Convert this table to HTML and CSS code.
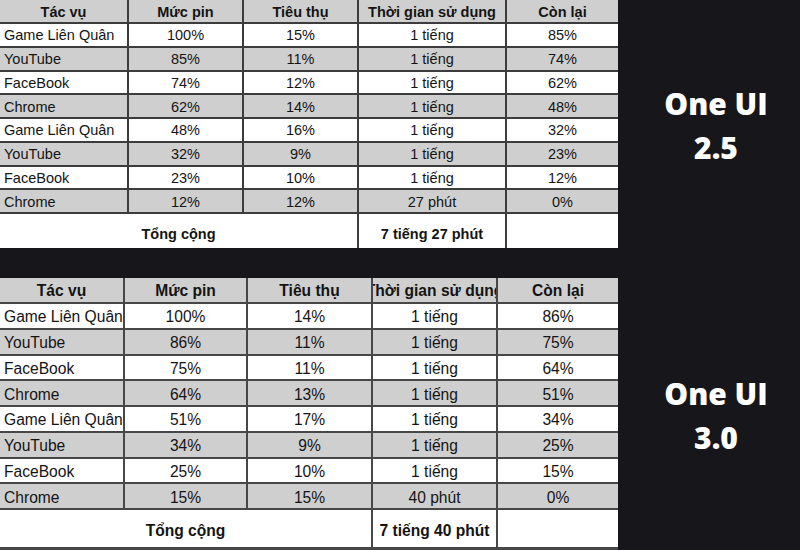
FILE: index.html
```html
<!DOCTYPE html>
<html lang="vi">
<head>
<meta charset="utf-8">
<title>One UI battery comparison</title>
<link rel="stylesheet" href="styles.css">
</head>
<body>
<div class="page">
  <div class="sheet sheet-a">
    <div class="c hd">Tác vụ</div><div class="c hd">Mức pin</div><div class="c hd">Tiêu thụ</div><div class="c hd">Thời gian sử dụng</div><div class="c hd">Còn lại</div>
    <div class="c l">Game Liên Quân</div><div class="c">100%</div><div class="c">15%</div><div class="c">1 tiếng</div><div class="c">85%</div>
    <div class="c l g">YouTube</div><div class="c g">85%</div><div class="c g">11%</div><div class="c g">1 tiếng</div><div class="c g">74%</div>
    <div class="c l">FaceBook</div><div class="c">74%</div><div class="c">12%</div><div class="c">1 tiếng</div><div class="c">62%</div>
    <div class="c l g">Chrome</div><div class="c g">62%</div><div class="c g">14%</div><div class="c g">1 tiếng</div><div class="c g">48%</div>
    <div class="c l">Game Liên Quân</div><div class="c">48%</div><div class="c">16%</div><div class="c">1 tiếng</div><div class="c">32%</div>
    <div class="c l g">YouTube</div><div class="c g">32%</div><div class="c g">9%</div><div class="c g">1 tiếng</div><div class="c g">23%</div>
    <div class="c l">FaceBook</div><div class="c">23%</div><div class="c">10%</div><div class="c">1 tiếng</div><div class="c">12%</div>
    <div class="c l g">Chrome</div><div class="c g">12%</div><div class="c g">12%</div><div class="c g">27 phút</div><div class="c g">0%</div>
    <div class="c b t span3">Tổng cộng</div><div class="c b t">7 tiếng 27 phút</div><div class="c"></div>
  </div>
  <div class="label"><span>One UI</span><span>2.5</span></div>

  <div class="sheet sheet-b">
    <div class="c hd">Tác vụ</div><div class="c hd">Mức pin</div><div class="c hd">Tiêu thụ</div><div class="c hd">Thời gian sử dụng</div><div class="c hd">Còn lại</div>
    <div class="c l">Game Liên Quân</div><div class="c">100%</div><div class="c">14%</div><div class="c">1 tiếng</div><div class="c">86%</div>
    <div class="c l g">YouTube</div><div class="c g">86%</div><div class="c g">11%</div><div class="c g">1 tiếng</div><div class="c g">75%</div>
    <div class="c l">FaceBook</div><div class="c">75%</div><div class="c">11%</div><div class="c">1 tiếng</div><div class="c">64%</div>
    <div class="c l g">Chrome</div><div class="c g">64%</div><div class="c g">13%</div><div class="c g">1 tiếng</div><div class="c g">51%</div>
    <div class="c l">Game Liên Quân</div><div class="c">51%</div><div class="c">17%</div><div class="c">1 tiếng</div><div class="c">34%</div>
    <div class="c l g">YouTube</div><div class="c g">34%</div><div class="c g">9%</div><div class="c g">1 tiếng</div><div class="c g">25%</div>
    <div class="c l">FaceBook</div><div class="c">25%</div><div class="c">10%</div><div class="c">1 tiếng</div><div class="c">15%</div>
    <div class="c l g">Chrome</div><div class="c g">15%</div><div class="c g">15%</div><div class="c g">40 phút</div><div class="c g">0%</div>
    <div class="c b t span3">Tổng cộng</div><div class="c b t">7 tiếng 40 phút</div><div class="c"></div>
  </div>
  <div class="label"><span>One UI</span><span>3.0</span></div>
</div>
</body>
</html>
```
FILE: styles.css
```css
html, body {
  margin: 0;
  padding: 0;
  background: #17161b;
}

.page {
  width: 800px;
  height: 550px;
  display: grid;
  grid-template-columns: 618px 182px;
  grid-template-rows: 248px 272px;
  row-gap: 30px;
  overflow: hidden;
}

.sheet {
  display: grid;
  background: #3c3c3c;
  column-gap: 2px;
  row-gap: 2px;
  font-family: "Liberation Sans", Arial, sans-serif;
  color: #141414;
  align-content: start;
}

.sheet-a {
  font-size: 14.5px;
  grid-template-columns: 127px 113px 113px 146px 111px;
  grid-template-rows: 22px repeat(8, 21.75px) 34px;
  height: 248px;
}

.sheet-b {
  font-size: 15.6px;
  grid-template-columns: 123px 121px 123px 123px 120px;
  grid-template-rows: 24px repeat(8, 23.75px) 37px;
  padding-bottom: 2px;
  height: 270px;
  background: #474747;
}

.c {
  background: #ffffff;
  display: flex;
  align-items: center;
  justify-content: center;
  white-space: nowrap;
  overflow: hidden;
  padding-top: 1px;
}

.sheet-b .c {
  padding-top: 3px;
}

.c.g,
.c.hd {
  background: #cfcfcf;
}

.c.hd,
.c.b {
  font-weight: bold;
}

.c.hd {
  padding-top: 1px;
}

.sheet-b .c.hd {
  padding-top: 2px;
}

.c.t {
  padding-top: 5px;
}

.sheet-b .c.t {
  padding-top: 4px;
}

.c.l {
  justify-content: flex-start;
  padding-left: 4px;
}

.span3 {
  grid-column: span 3;
}

.label {
  display: flex;
  flex-direction: column;
  align-items: center;
  justify-content: center;
  padding-left: 14px;
  padding-top: 3px;
  color: #ffffff;
  font-family: "Open Sans", "Noto Sans", sans-serif;
  font-weight: 800;
  font-size: 30px;
  line-height: 44px;
}
```
